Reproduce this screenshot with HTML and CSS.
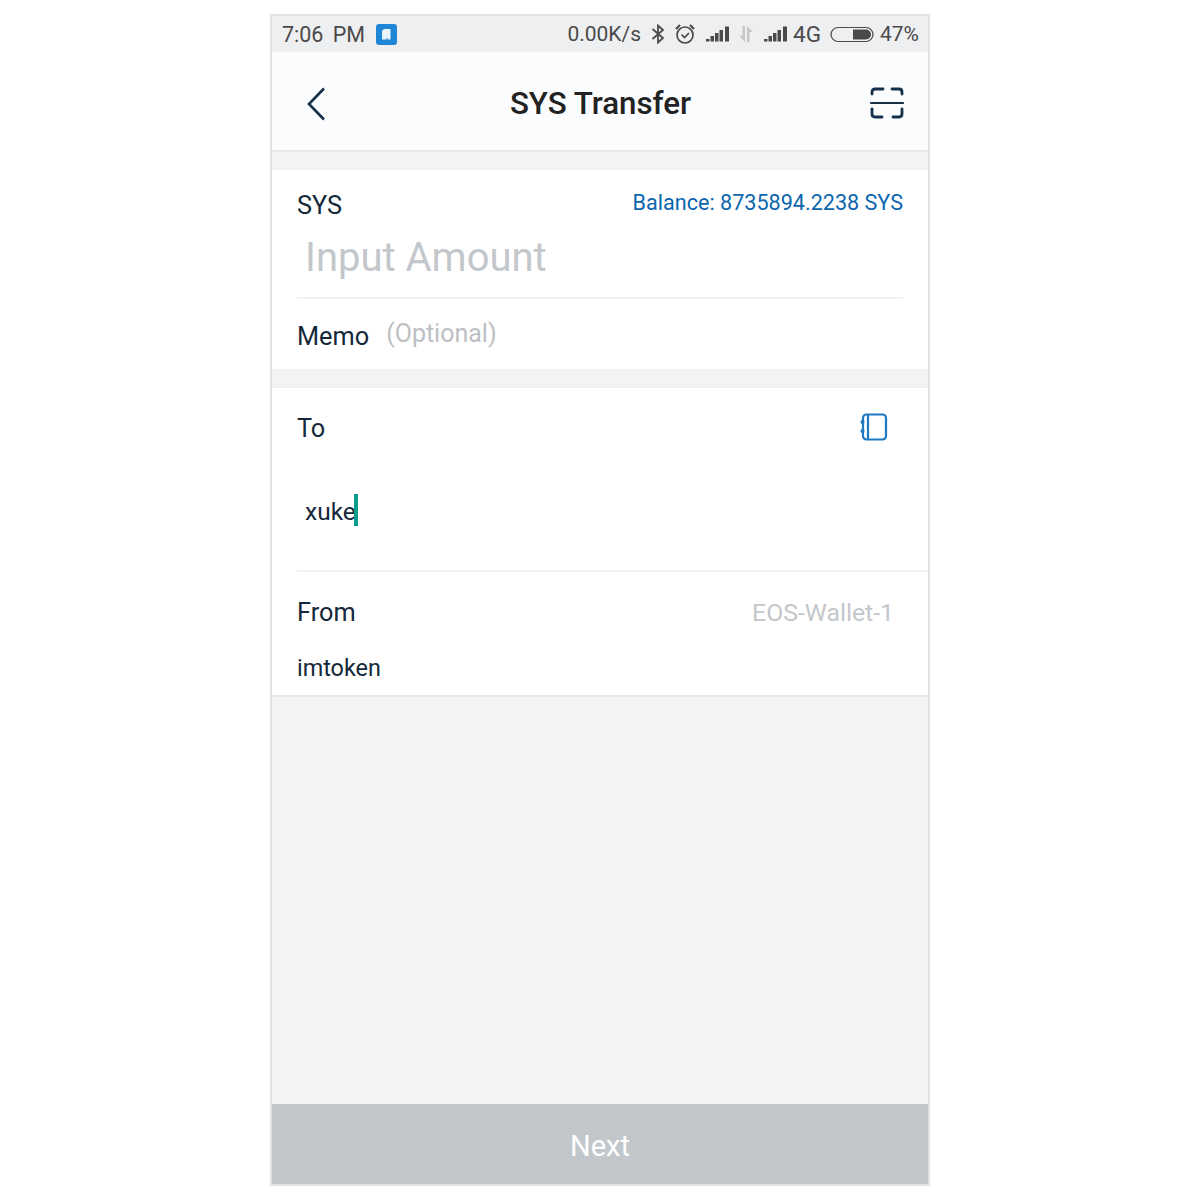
FILE: index.html
```html
<!DOCTYPE html>
<html lang="en">
<head>
  <meta charset="UTF-8">
  <title>SYS Transfer</title>
  <link rel="stylesheet" href="styles.css">
</head>
<body>
  <div class="phone">
    <!-- Status bar -->
    <div class="status-bar">
      <span class="time">7:06 PM</span>
      <svg class="app-badge" width="21" height="21" viewBox="0 0 21 21">
        <rect width="21" height="21" rx="3" fill="#1f86d6"/>
        <path d="M6 7 L8 5 H14.5 V15.5 H11.5 V14 H10.5 V15.5 H6 Z" fill="#e8f3fb"/>
      </svg>
      <span class="status-right">
        <span class="speed">0.00K/s</span>
        <svg class="bt" width="14" height="20" viewBox="0 0 14 20" fill="none" stroke="#4a4a4a" stroke-width="1.8">
          <path d="M1.5 5 L12 14 L7 18.5 V1.5 L12 6 L1.5 15"/>
        </svg>
        <svg class="alarm" width="22" height="22" viewBox="0 0 22 22" fill="none" stroke="#4a4a4a" stroke-width="1.7">
          <circle cx="11" cy="12" r="8"/>
          <path d="M7.5 11.5 L10.5 14.5 L15 10"/>
          <path d="M2 6 L6 2 M20 6 L16 2" stroke-width="2.2"/>
        </svg>
        <svg class="signal" width="23" height="16" viewBox="0 0 23 16" fill="#4a4a4a">
          <rect x="0" y="13" width="3.5" height="2.5"/>
          <rect x="4.5" y="10" width="3.5" height="5.5"/>
          <rect x="9" y="7" width="3.5" height="8.5"/>
          <rect x="13.5" y="4" width="3.5" height="11.5"/>
          <rect x="19" y="0.5" width="4" height="15"/>
        </svg>
        <svg class="data" width="16" height="18" viewBox="0 0 16 18" fill="#c4c6c8">
          <path d="M4.5 1 H7 V17 L1 10.5 H4.5 Z"/>
          <path d="M9 17 H11.5 V7 H15 L9 1 Z"/>
        </svg>
        <svg class="signal" width="23" height="16" viewBox="0 0 23 16" fill="#4a4a4a">
          <rect x="0" y="13" width="3.5" height="2.5"/>
          <rect x="4.5" y="10" width="3.5" height="5.5"/>
          <rect x="9" y="7" width="3.5" height="8.5"/>
          <rect x="13.5" y="4" width="3.5" height="11.5"/>
          <rect x="19" y="0.5" width="4" height="15"/>
        </svg>
        <span class="net">4G</span>
        <svg class="battery" width="45" height="17" viewBox="0 0 45 17">
          <rect x="1" y="1.5" width="42" height="14" rx="7" fill="none" stroke="#4a4a4a" stroke-width="1.2"/>
          <path d="M23 3.5 H36 a5 5 0 0 1 0 10 H23 Z" fill="#4a4a4a"/>
        </svg>
        <span class="percent">47%</span>
      </span>
    </div>

    <!-- Nav -->
    <div class="nav">
      <svg class="back-icon" width="20" height="34" viewBox="0 0 20 34" fill="none" stroke="#14304a" stroke-width="2.6">
        <path d="M18 1.5 L3 17 L18 32.5"/>
      </svg>
      <h1 class="nav-title">SYS Transfer</h1>
      <svg width="34" height="32" viewBox="0 0 34 32" fill="none" stroke="#14304a" stroke-width="2.8" stroke-linecap="round">
        <path d="M2 7 V5 Q2 2 5 2 H13 M22 2 H29 Q32 2 32 5 V7"/>
        <path d="M1 16 H33" stroke-width="2.2"/>
        <path d="M2 22 V27 Q2 30 5 30 H12 M23 30 H29 Q32 30 32 27 V22"/>
      </svg>
    </div>

    <!-- Montant -->
    <div class="section amount">
      <div class="amount-head">
        <span class="label sys-label">SYS</span>
        <span class="balance">Balance: 8735894.2238 SYS</span>
      </div>
      <div class="amount-input">Input Amount</div>
      <div class="memo-row">
        <span class="label memo-label">Memo</span>
        <span class="memo-hint">(Optional)</span>
      </div>
    </div>

    <!-- Destinataire -->
    <div class="section recipient">
      <div class="to-row">
        <span class="label">To</span>
        <svg class="book-icon" width="28" height="28" viewBox="0 0 28 28" fill="none" stroke="#1e78c2" stroke-width="2.2">
          <rect x="3" y="1.5" width="23" height="25" rx="3.5"/>
          <path d="M8 1.5 V26.5"/>
          <circle cx="2.5" cy="9" r="2" fill="#1e78c2" stroke="none"/>
          <circle cx="2.5" cy="18" r="2" fill="#1e78c2" stroke="none"/>
        </svg>
      </div>
      <div class="to-input"><span class="to-value">xuke</span><span class="caret"></span></div>
      <div class="from-row">
        <span class="label">From</span>
        <span class="wallet">EOS-Wallet-1</span>
      </div>
      <div class="from-name">imtoken</div>
    </div>

    <div class="spacer"></div>

    <div class="next-btn">Next</div>
  </div>
</body>
</html>
```

FILE: styles.css
```css
/* Style global */
body {
  margin: 0;
  background: white;
  font-family: 'Roboto', sans-serif;
  color: #14283a;
}

.phone {
  box-sizing: border-box;
  width: 660px;
  height: 1172px;
  margin: 14px auto 0;
  border: 2px solid #e0e4e6;
  display: flex;
  flex-direction: column;
  background: #f2f3f5;
}

/* Status bar */
.status-bar {
  height: 36px;
  flex: none;
  display: flex;
  align-items: center;
  padding: 0 9px 0 10px;
  background: #eeeff1;
  color: #4a4a4a;
  font-size: 21px;
}

.time {
  font-size: 21.5px;
  word-spacing: 4px;
  margin-right: 11px;
}

.status-right {
  margin-left: auto;
  display: flex;
  align-items: center;
}

.speed {
  margin-right: 10px;
}

.bt {
  margin-right: 9px;
}

.alarm {
  margin-right: 10px;
}

.signal {
  margin-right: 9px;
}

.data {
  margin-right: 10px;
}

.signal + .net {
  margin-left: -3px;
}

.net {
  font-size: 22.5px;
  margin-right: 9px;
}

.battery {
  margin-right: 5px;
}

/* Nav */
.nav {
  height: 100px;
  flex: none;
  box-sizing: border-box;
  display: flex;
  align-items: center;
  justify-content: space-between;
  padding: 4px 24px 0 34px;
  background: #fbfcfe;
  border-bottom: 2px solid #e6e8ea;
}

.back-icon {
  margin-top: 2px;
}

.nav-title {
  margin: 0 0 0 5px;
  font-size: 31.3px;
  font-weight: 500;
  color: #222;
}

.section {
  background: white;
}

.label {
  font-size: 25.3px;
}

/* Montant */
.amount {
  height: 199px;
  flex: none;
  margin-top: 18px;
  padding: 0 25px;
  box-sizing: border-box;
}

.amount-head {
  display: flex;
  justify-content: space-between;
  align-items: flex-start;
  padding-top: 20px;
}

.balance {
  font-size: 21.6px;
  color: #0b66ae;
  line-height: 26px;
}

.sys-label {
  line-height: 32px;
}

.amount-input {
  font-size: 40px;
  line-height: 48px;
  color: #c3c7cb;
  padding: 12px 0 15px 8px;
  border-bottom: 2px solid #f0f1f3;
}

.memo-row {
  display: flex;
  align-items: center;
  height: 72px;
}

.memo-label {
  margin-top: 2px;
}

.memo-hint {
  margin-left: 17px;
  margin-bottom: 4px;
  font-size: 25px;
  color: #bcc0c4;
}

/* Destinataire */
.recipient {
  height: 310px;
  flex: none;
  margin-top: 18px;
  padding-left: 25px;
  box-sizing: border-box;
  border-top: 1px solid #eef0f2;
  border-bottom: 2px solid #e6e8ea;
}

.to-row {
  height: 80px;
  display: flex;
  justify-content: space-between;
  align-items: center;
  padding-right: 40px;
}

.book-icon {
  margin-bottom: 2px;
}

.to-input {
  box-sizing: border-box;
  height: 104px;
  padding: 0 0 18px 8px;
  display: flex;
  align-items: center;
  font-size: 24.5px;
  border-bottom: 2px solid #f2f3f5;
}

.to-value {
  margin-top: 2px;
}

.caret {
  width: 4px;
  height: 32px;
  margin-left: -2px;
  background: #0c9c8c;
}

.from-row {
  height: 80px;
  display: flex;
  justify-content: space-between;
  align-items: center;
  padding-right: 34px;
}

.wallet {
  font-size: 24.8px;
  color: #c3c7cb;
}

.from-name {
  font-size: 23.4px;
  line-height: 30px;
  padding-top: 1px;
}

.spacer {
  flex: 1;
}

/* Bouton */
.next-btn {
  height: 80px;
  flex: none;
  box-sizing: border-box;
  padding-top: 4px;
  display: flex;
  align-items: center;
  justify-content: center;
  background: #c2c7cb;
  color: white;
  font-size: 29px;
}
```
